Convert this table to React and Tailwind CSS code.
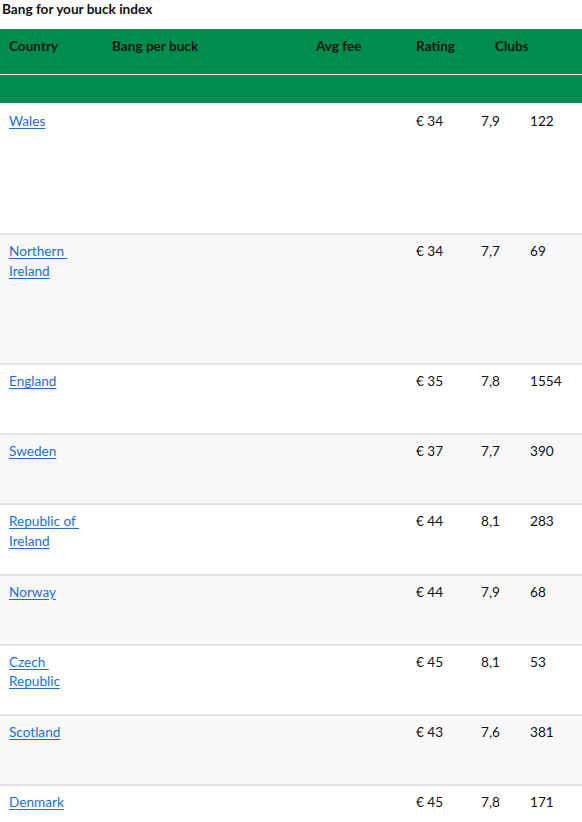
const rows = [
  { country: ["Wales"], fee: "€ 34", rating: "7,9", clubs: "122", tall: true },
  { country: ["Northern\u00a0", "Ireland"], fee: "€ 34", rating: "7,7", clubs: "69", tall: true },
  { country: ["England"], fee: "€ 35", rating: "7,8", clubs: "1554" },
  { country: ["Sweden"], fee: "€ 37", rating: "7,7", clubs: "390" },
  { country: ["Republic of\u00a0", "Ireland"], fee: "€ 44", rating: "8,1", clubs: "283" },
  { country: ["Norway"], fee: "€ 44", rating: "7,9", clubs: "68" },
  { country: ["Czech\u00a0", "Republic"], fee: "€ 45", rating: "8,1", clubs: "53" },
  { country: ["Scotland"], fee: "€ 43", rating: "7,6", clubs: "381" },
  { country: ["Denmark"], fee: "€ 45", rating: "7,8", clubs: "171" },
];

export default function App() {
  return (
    <div className="w-[582px] bg-white text-[13.6px] leading-[19.5px] text-[#111] font-['Lato','Liberation_Sans',sans-serif]">
      {/* Title */}
      <div className="h-[29px] pl-[2px] font-bold leading-[18px] text-[#111]">
        Bang for your buck index
      </div>

      {/* Table head */}
      <div className="bg-[#008c4f] font-bold text-[#0b1a10]">
        <div className="flex h-[45px] pt-2">
          <div className="w-[104px] pl-[9px]">Country</div>
          <div className="w-[204px] pl-2">Bang per buck</div>
          <div className="w-[100px] pl-2">Avg fee</div>
          <div className="w-[79px] pl-2">Rating</div>
          <div className="flex-1 pl-2">Clubs</div>
        </div>
        <div className="h-[1px] bg-[#e4e4e4]" />
        <div className="h-[28px]" />
      </div>

      {/* Body */}
      {rows.map((r, i) => (
        <div
          key={i}
          className={`flex pt-[7px] border-t-2 ${r.tall ? "h-[130px]" : "h-[70.2px]"} ${
            i > 0 ? "border-[#e4e4e4]" : "border-white"
          } ${i % 2 === 1 ? "bg-[#f8f8f8]" : "bg-white"}`}
        >
          <div className="w-[408px] pl-[9px]">
            {r.country.map((line, j) => (
              <div key={j}>
                <a href="#" className="text-[#1c6fd6] underline underline-offset-2">
                  {line}
                </a>
              </div>
            ))}
          </div>
          <div className="w-[65px] pl-2">{r.fee}</div>
          <div className="w-[49px] pl-2">{r.rating}</div>
          <div className="flex-1 pl-2">{r.clubs}</div>
        </div>
      ))}
    </div>
  );
}
